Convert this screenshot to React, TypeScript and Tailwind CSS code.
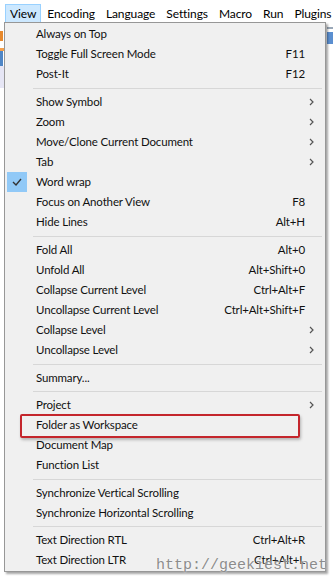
import React from "react";

type Item =
  | { kind: "sep"; h: number }
  | { kind: "row"; label: string; shortcut?: string; sub?: boolean; checked?: boolean };

const items: Item[] = [
  { kind: "row", label: "Always on Top" },
  { kind: "row", label: "Toggle Full Screen Mode", shortcut: "F11" },
  { kind: "row", label: "Post-It", shortcut: "F12" },
  { kind: "sep", h: 8 },
  { kind: "row", label: "Show Symbol", sub: true },
  { kind: "row", label: "Zoom", sub: true },
  { kind: "row", label: "Move/Clone Current Document", sub: true },
  { kind: "row", label: "Tab", sub: true },
  { kind: "row", label: "Word wrap", checked: true },
  { kind: "row", label: "Focus on Another View", shortcut: "F8" },
  { kind: "row", label: "Hide Lines", shortcut: "Alt+H" },
  { kind: "sep", h: 8 },
  { kind: "row", label: "Fold All", shortcut: "Alt+0" },
  { kind: "row", label: "Unfold All", shortcut: "Alt+Shift+0" },
  { kind: "row", label: "Collapse Current Level", shortcut: "Ctrl+Alt+F" },
  { kind: "row", label: "Uncollapse Current Level", shortcut: "Ctrl+Alt+Shift+F" },
  { kind: "row", label: "Collapse Level", sub: true },
  { kind: "row", label: "Uncollapse Level", sub: true },
  { kind: "sep", h: 8 },
  { kind: "row", label: "Summary..." },
  { kind: "sep", h: 7 },
  { kind: "row", label: "Project", sub: true },
  { kind: "row", label: "Folder as Workspace" },
  { kind: "row", label: "Document Map" },
  { kind: "row", label: "Function List" },
  { kind: "sep", h: 8 },
  { kind: "row", label: "Synchronize Vertical Scrolling" },
  { kind: "row", label: "Synchronize Horizontal Scrolling" },
  { kind: "sep", h: 7 },
  { kind: "row", label: "Text Direction RTL", shortcut: "Ctrl+Alt+R" },
  { kind: "row", label: "Text Direction LTR", shortcut: "Ctrl+Alt+L" },
];

const menuBar = ["View", "Encoding", "Language", "Settings", "Macro", "Run", "Plugins"];

const Chevron = () => (
  <svg width="5" height="8" viewBox="0 0 5 8" fill="none">
    <path d="M1 1l3 3-3 3" stroke="#555" strokeWidth="1.2" />
  </svg>
);

const Check = () => (
  <svg width="10" height="8" viewBox="0 0 10 8" fill="none">
    <path d="M1 4l3 3 5-6" stroke="#333" strokeWidth="1.4" />
  </svg>
);

export default function App() {
  return (
    <div className="relative w-[333px] h-[580px] overflow-hidden bg-white text-black font-['Lato','Open_Sans',sans-serif]">
      {/* menu bar */}
      <div className="flex h-[23px] items-start pl-[5px] pt-[4px] text-[12px] tracking-[-0.1px]">
        {menuBar.map((m, i) => (
          <div
            key={m}
            className={
              i === 0
                ? "h-[19px] leading-[17px] px-[4px] border border-[#99d1ff] bg-[#cce8ff]"
                : "h-[19px] leading-[17px] pl-[5px] pr-[4px] border border-transparent whitespace-nowrap"
            }
          >
            {m}
          </div>
        ))}
      </div>

      {/* toolbar / editor underneath */}
      <div className="flex flex-col">
        <div className="flex h-[25px] items-center justify-between">
          <div className="h-[10px] w-[3px] bg-[#e8892c]" />
          <div className="flex flex-col gap-[3px]">
            <div className="h-[2px] w-[6px] bg-[#9aa8b8]" />
            <div className="h-[12px] w-[6px] bg-[#5b8fd0]" />
          </div>
        </div>
        <div className="h-[3px] w-[5px] bg-[#f5a04a]" />
        <div className="h-[15px] w-[3px] bg-[#4f86c6]" />
        <div className="h-[22px] w-[5px] bg-[#e6e6f5]" />
      </div>

      {/* dropdown */}
      <div className="absolute left-[4px] top-[22px] w-[322px] border border-[#979797] bg-[#f0f0f0] py-[1px] shadow-[2px_2px_2px_rgba(0,0,0,0.35)] text-[11.5px] tracking-[-0.15px] text-[#111]">
        {items.map((it, i) =>
          it.kind === "sep" ? (
            <div key={i} className="flex items-center pl-[28px] pr-[3px]" style={{ height: it.h }}>
              <div className="h-px w-full bg-[#d7d7d7]" />
            </div>
          ) : (
            <div key={i} className="relative flex h-[20px] items-center">
              <div className="flex w-[31px] justify-start pl-[2px]">
                {it.checked && (
                  <div className="flex h-[20px] w-[20px] items-center justify-center bg-[#91c9f7]">
                    <Check />
                  </div>
                )}
              </div>
              <div className="flex-1 whitespace-nowrap">{it.label}</div>
              <div className="whitespace-nowrap">{it.shortcut}</div>
              <div className="flex w-[20px] justify-end pr-[11px]">{it.sub && <Chevron />}</div>
            </div>
          )
        )}
      </div>

      {/* highlight annotation */}
      <div className="absolute left-[20px] top-[414px] h-[24px] w-[280px] rounded-[2px] border-2 border-[#c4262c] shadow-[1px_2px_3px_rgba(0,0,0,0.25)]" />

      {/* watermark */}
      <div className="absolute left-[156px] top-[557px] font-['Liberation_Mono',monospace] text-[15px] leading-[18px] text-[#8c8c8c] [text-shadow:0_0_2px_#fff]">
        http://geekiest.net
      </div>
    </div>
  );
}
